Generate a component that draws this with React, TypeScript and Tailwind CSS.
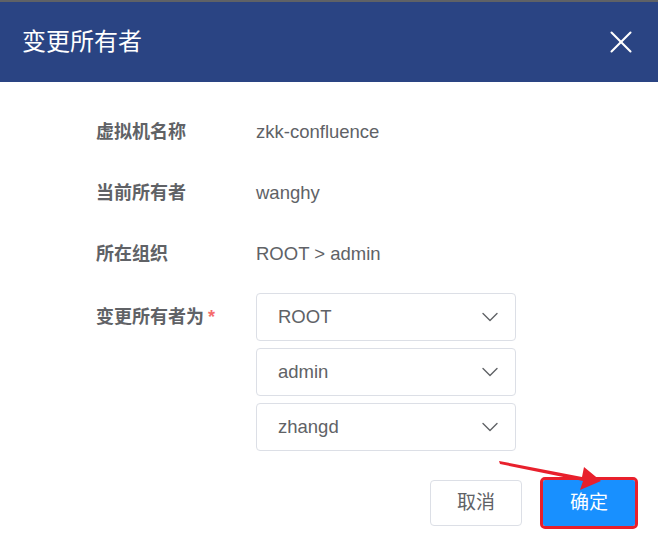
import { ChevronDown, X } from "lucide-react";

const font = { fontFamily: '"Liberation Sans", "Noto Sans CJK SC", sans-serif' };

const info = [
  { label: "虚拟机名称", value: "zkk-confluence" },
  { label: "当前所有者", value: "wanghy" },
  { label: "所在组织", value: "ROOT > admin" },
];

const selects = ["ROOT", "admin", "zhangd"];

const App = () => {
  return (
    <div className="relative w-[658px] h-[547px] bg-white overflow-hidden" style={font}>
      <div className="h-[2px] bg-[#5f6266]"></div>
      <div className="h-[80px] bg-[#2a4483] flex items-center justify-between pl-[22px] pr-[18px]">
        <span className="text-[24px] text-white">变更所有者</span>
        <X className="w-[38px] h-[38px] text-white" strokeWidth={1.3} />
      </div>

      <div className="pt-[30px] pl-[96px]">
        <div className="flex flex-col gap-[21px]">
          {info.map((row) => (
            <div key={row.label} className="flex items-center h-10 text-[18px] text-[#606266]">
              <span className="w-[160px] font-bold">{row.label}</span>
              <span className="text-[18.5px]">{row.value}</span>
            </div>
          ))}
        </div>

        <div className="flex mt-[19px]">
          <div className="w-[160px] h-12 flex items-center text-[18px] font-bold text-[#606266]">
            变更所有者为
            <span className="text-[#f56c6c] ml-1">*</span>
          </div>
          <div className="flex flex-col gap-[7px]">
            {selects.map((s) => (
              <div
                key={s}
                className="w-[260px] h-12 border border-[#dcdfe6] rounded flex items-center justify-between pl-[21px] pr-[11px] text-[18.5px] text-[#606266]"
              >
                <span>{s}</span>
                <ChevronDown className="w-[28px] h-[28px] text-[#606266]" strokeWidth={1.2} />
              </div>
            ))}
          </div>
        </div>
      </div>

      <div className="flex justify-end items-center gap-[21px] pr-[23px] mt-[29px]">
        <button className="w-[92px] h-[46px] border border-[#dcdfe6] rounded text-[19px] text-[#606266] bg-white">
          取消
        </button>
        <button className="w-[92px] h-[46px] bg-[#1890ff] text-white text-[19px] outline-[3px] outline-solid outline-[#e8202c] rounded-[2px]">
          确定
        </button>
      </div>

      <svg className="absolute left-0 top-0 pointer-events-none" width="658" height="547">
        <polygon points="499,461 500,464 583,481 580,490 601,481 584,467 582,477" fill="#e8202c" />
      </svg>
    </div>
  );
};

export default App;
